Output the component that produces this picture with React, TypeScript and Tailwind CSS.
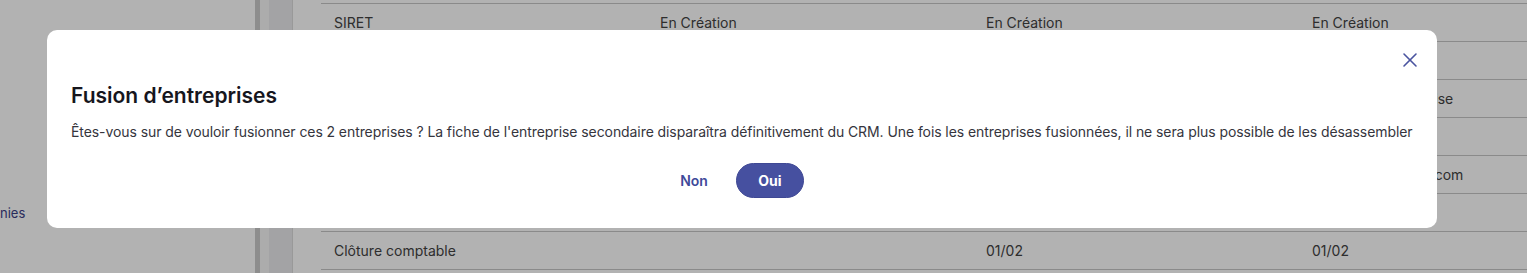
import { X } from 'lucide-react';

const rows: string[][] = [
  ['SIRET', 'En Création', 'En Création', 'En Création'],
  ['Forme juridique', 'SAS', 'SARL', 'SAS'],
  ['Catégorie', 'PME', 'PME', 'Très petite entreprise'],
  ['Téléphone', '01 23 45 67 89', '01 98 76 54 32', '01 11 22 33 44'],
  ['Email', 'contact@societe.fr', 'info@exemple.fr', 'contact@societes.com'],
  ['Effectif', '12', '4', '8'],
  ['Clôture comptable', '', '01/02', '01/02'],
];

export default function App() {
  return (
    <div className="relative h-[273px] w-full overflow-hidden bg-white font-['Inter',sans-serif]">
      <div className="flex h-full">
        <aside className="flex w-[255px] shrink-0 flex-col pt-[203px]">
          <span className="text-[13px] leading-5 text-[#3b3f86]">nies</span>
        </aside>
        <div className="w-[5px] shrink-0 bg-[#cbcbcb]" />
        <div className="w-[9px] shrink-0 bg-[#f7f7f7]" />
        <div className="w-[24px] shrink-0 border-r border-[#dcdcdc] bg-[#eaeaed]" />
        <main className="flex-1 pl-[28px] pt-[3px]">
          <div className="w-[1304px] border-t border-[#c6c6c6]">
            {rows.map((row, i) => (
              <div
                key={i}
                className="grid h-[38px] grid-cols-[326px_326px_326px_326px] items-center border-b border-[#c6c6c6] text-sm text-[#424242]"
              >
                {row.map((cell, j) => (
                  <div key={j} className="whitespace-nowrap px-[13px]">
                    {cell}
                  </div>
                ))}
              </div>
            ))}
          </div>
        </main>
      </div>

      <div className="absolute inset-0 bg-black/30" />

      <div className="absolute left-[47px] top-[30px] flex h-[198px] w-[1390px] flex-col rounded-[10px] bg-white px-6">
        <div className="-mr-[9px] flex justify-end pt-[18px]">
          <button type="button" className="flex h-6 w-6 items-center justify-center text-[#4a54a0]">
            <X size={24} strokeWidth={1.6} />
          </button>
        </div>
        <h2 className="mt-[10px] text-[21px] font-semibold leading-7 text-[#16161d]">
          Fusion d’entreprises
        </h2>
        <p className="mt-3 whitespace-nowrap text-sm leading-5 tracking-[-0.08px] text-[#35353d]">
          Êtes-vous sur de vouloir fusionner ces 2 entreprises ? La fiche de l'entreprise secondaire
          disparaîtra définitivement du CRM. Une fois les entreprises fusionnées, il ne sera plus
          possible de les désassembler
        </p>
        <div className="mt-[21px] flex items-center justify-center gap-3 pr-4">
          <button type="button" className="h-[35px] px-4 text-sm font-semibold text-[#3f4a9a]">
            Non
          </button>
          <button
            type="button"
            className="h-[35px] w-[68px] rounded-full border border-[#3f4894] bg-[#4650a0] text-sm font-bold text-white"
          >
            Oui
          </button>
        </div>
      </div>
    </div>
  );
}
